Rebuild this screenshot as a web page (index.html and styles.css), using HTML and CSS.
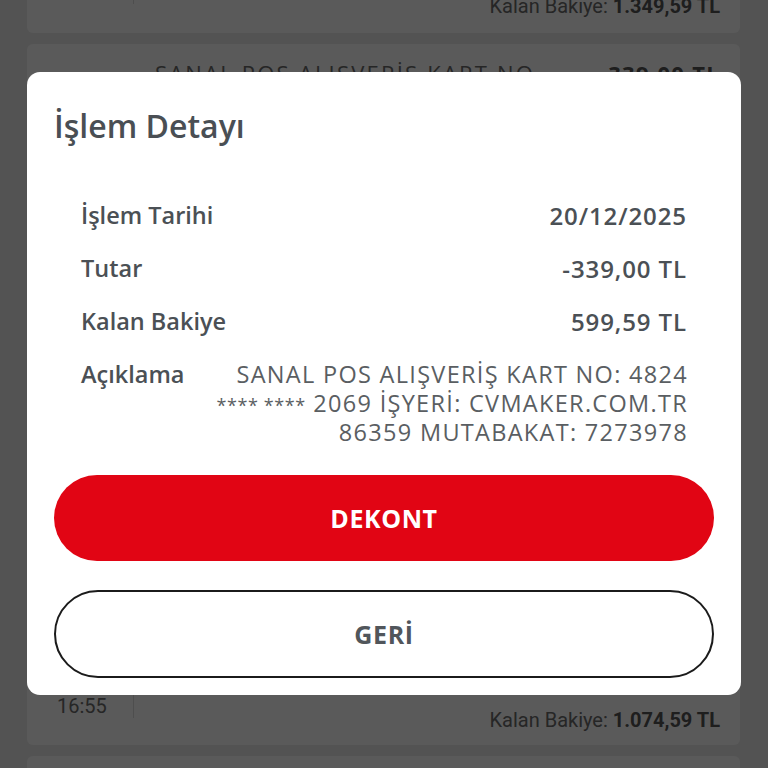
FILE: index.html
```html
<!DOCTYPE html>
<html lang="tr">
<head>
<meta charset="utf-8">
<title>İşlem Detayı</title>
<link rel="stylesheet" href="styles.css">
</head>
<body>
<div class="list">
  <div class="card card-first">
    <div class="card-bottom">
      <div class="time"></div>
      <div class="divider"></div>
      <div class="balance">Kalan Bakiye: <b>1.349,59 TL</b></div>
    </div>
  </div>
  <div class="card card-tall">
    <div class="card-top">
      <div class="desc">SANAL POS ALIŞVERİŞ KART NO</div>
      <div class="amount">-339,00 TL</div>
    </div>
    <div class="card-bottom">
      <div class="time">16:55</div>
      <div class="divider"></div>
      <div class="balance">Kalan Bakiye: <b>1.074,59 TL</b></div>
    </div>
  </div>
  <div class="card card-next"></div>
</div>

<div class="overlay"></div>

<div class="dialog">
  <h1 class="dialog-title">İşlem Detayı</h1>
  <div class="rows">
    <div class="row">
      <span class="label">İşlem Tarihi</span>
      <span class="value">20/12/2025</span>
    </div>
    <div class="row">
      <span class="label">Tutar</span>
      <span class="value">-339,00 TL</span>
    </div>
    <div class="row">
      <span class="label">Kalan Bakiye</span>
      <span class="value">599,59 TL</span>
    </div>
    <div class="row">
      <span class="label">Açıklama</span>
      <span class="text">SANAL POS ALIŞVERİŞ KART NO: 4824<br><span class="mask">**** ****</span> 2069 İŞYERİ: CVMAKER.COM.TR<br>86359 MUTABAKAT: 7273978</span>
    </div>
  </div>
  <div class="actions">
    <button class="btn btn-primary">DEKONT</button>
    <button class="btn btn-outline">GERİ</button>
  </div>
</div>
</body>
</html>
```

FILE: styles.css
```css
* { box-sizing: border-box; }

html, body {
  margin: 0;
  padding: 0;
  width: 768px;
  height: 768px;
  overflow: hidden;
}

body {
  background: #ececec;
  font-family: "Open Sans", "Liberation Sans", sans-serif;
  position: relative;
}

.list {
  display: flex;
  flex-direction: column;
  gap: 11px;
  padding: 0 28px 0 27px;
  margin-top: -60px;
}

.card {
  background: #ffffff;
  border-radius: 6px;
  display: flex;
  flex-direction: column;
  justify-content: space-between;
  padding: 16px 20px 13px 30px;
}

.card-first { height: 93px; justify-content: flex-end; padding-bottom: 15px; }
.card-tall { height: 701px; }
.card-next { height: 60px; }

.card-top {
  display: flex;
  justify-content: space-between;
  padding-left: 98px;
  font-size: 22px;
  line-height: 26px;
  color: #6b6b6b;
}

.desc { letter-spacing: 2.2px; }
.amount { font-weight: 700; color: #555; letter-spacing: 1.3px; }

.card-bottom {
  display: flex;
  align-items: flex-start;
  font-size: 20px;
  line-height: 24px;
  color: #6b6b6b;
  font-family: "Roboto", "Open Sans", sans-serif;
}

.time {
  width: 76px;
  margin-top: -14px;
}

.divider {
  width: 1px;
  height: 32px;
  margin-top: -22px;
  background: #dedede;
}

.balance { margin-left: auto; }
.balance b { color: #555; font-weight: 700; }

.overlay {
  position: fixed;
  inset: 0;
  background: rgba(0, 0, 0, 0.647);
}

.dialog {
  position: absolute;
  left: 27px;
  top: 72px;
  width: 714px;
  height: 623px;
  background: #ffffff;
  border-radius: 13px;
  padding: 34px 27px 17px 27px;
  display: flex;
  flex-direction: column;
}

.dialog-title {
  margin: 0;
  font-size: 32px;
  line-height: 40px;
  font-weight: 600;
  color: #4a4f54;
}

.rows {
  display: flex;
  flex-direction: column;
  gap: 24px;
  margin-top: 55px;
  padding: 0 27px;
}

.row {
  display: flex;
  justify-content: space-between;
  align-items: flex-start;
  font-size: 23.5px;
  line-height: 29px;
  color: #4b5055;
}

.label { font-weight: 600; flex-shrink: 0; }
.value { font-weight: 600; font-size: 24px; letter-spacing: 0.9px; }

.text {
  font-weight: 400;
  text-align: right;
  white-space: nowrap;
  color: #5a5e62;
  font-size: 23.5px;
  letter-spacing: 1.3px;
  margin-right: -1px;
}

.mask {
  font-size: 18px;
  line-height: 1;
  letter-spacing: 0.6px;
}

.actions {
  display: flex;
  flex-direction: column;
  gap: 29px;
  margin-top: 28px;
}

.btn {
  display: flex;
  align-items: center;
  justify-content: center;
  font-family: "Open Sans", "Liberation Sans", sans-serif;
  font-weight: 700;
  font-size: 25px;
  letter-spacing: 0.6px;
  border-radius: 44px;
  cursor: pointer;
}

.btn-primary {
  height: 86px;
  background: #e10514;
  color: #ffffff;
  border: none;
}

.btn-outline {
  height: 88px;
  background: #ffffff;
  color: #51565b;
  border: 2px solid #1b1b1b;
}
```
